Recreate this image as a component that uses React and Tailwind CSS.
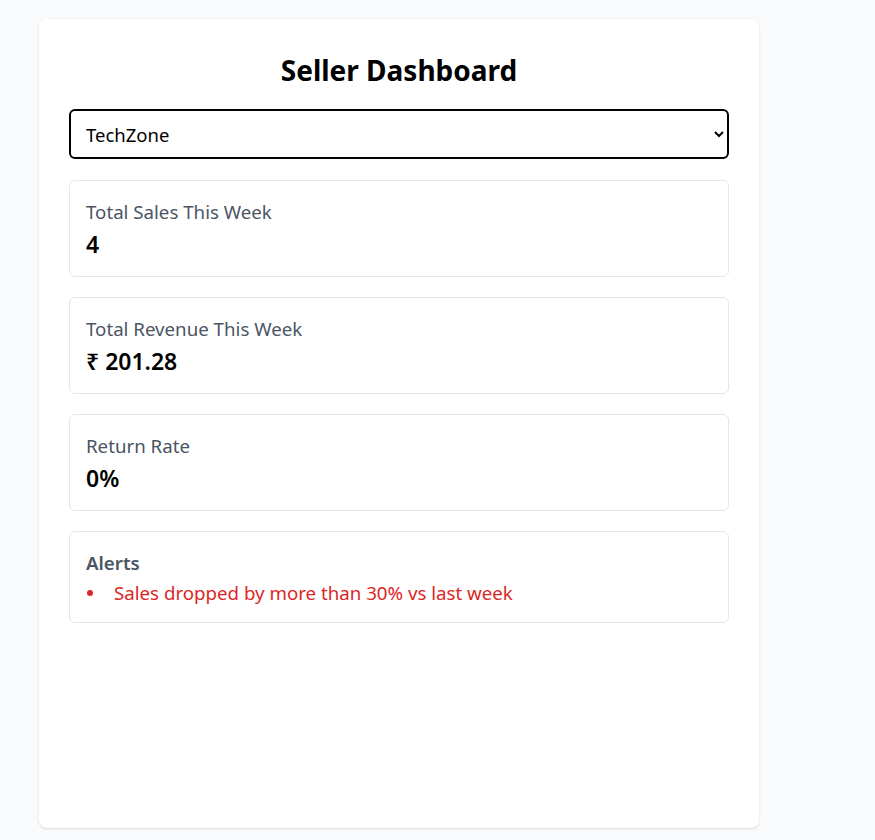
import React from "react";

function Stat({ label, value }) {
  return (
    <div className="rounded-md border border-gray-200 px-4 pt-[17px] pb-[15px]">
      <div className="text-[18.7px] leading-[27px] text-[#4b5563]">{label}</div>
      <div className="mt-[3px] text-[23px] leading-[33px] font-semibold text-black">{value}</div>
    </div>
  );
}

export default function App() {
  return (
    <div className="min-h-[840px] bg-[#f9fafb]" style={{ fontFamily: '"Noto Sans", "Open Sans", sans-serif' }}>
      <div className="pl-[39px] pt-[19px] pb-[12px]">
        <div className="w-[720px] h-[809px] rounded-lg bg-white shadow-sm px-[30px] pt-[30px]">
          <h1 className="text-center text-[28px] leading-[42px] font-bold text-black">Seller Dashboard</h1>
          <select className="mt-[18px] w-full h-[50px] rounded-md border-2 border-black bg-white px-[11px] text-[18.5px] text-black">
            <option>TechZone</option>
          </select>
          <div className="mt-[21px] flex flex-col gap-[20px]">
            <Stat label="Total Sales This Week" value="4" />
            <Stat label="Total Revenue This Week" value="₹ 201.28" />
            <Stat label="Return Rate" value="0%" />
            <div className="rounded-md border border-gray-200 px-4 pt-[17px] pb-[16px]">
              <div className="text-[18.7px] leading-[27px] font-semibold text-[#4b5563]">Alerts</div>
              <ul className="mt-[3px] text-[18.7px] leading-[27px] text-[#dc2626]">
                <li className="flex items-center">
                  <span className="ml-[1px] w-[6px] h-[6px] rounded-full bg-[#dc2626]" />
                  <span className="ml-[21px]">Sales dropped by more than 30% vs last week</span>
                </li>
              </ul>
            </div>
          </div>
        </div>
      </div>
    </div>
  );
}
